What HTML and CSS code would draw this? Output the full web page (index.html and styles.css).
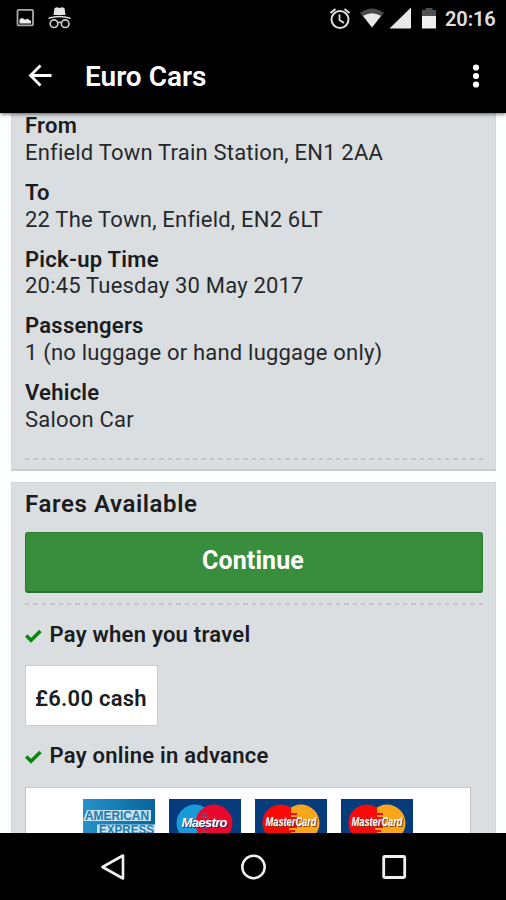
FILE: index.html
```html
<!DOCTYPE html>
<html lang="en">
<head>
<meta charset="utf-8">
<title>Euro Cars</title>
<link rel="stylesheet" href="styles.css">
</head>
<body>
<div class="phone">
  <header class="top">
    <div class="status">
      <svg class="notif" width="60" height="24" viewBox="0 0 60 24">
        <rect x="1.5" y="3.8" width="15.5" height="15.5" rx="1" fill="none" stroke="#a8a8a8" stroke-width="1.8"/>
        <path d="M3.5 17.500v-4l2.5-1.8 2.8 2 2.700-1 3.500 2.200v2.600z" fill="#eee"/>
        <path d="M37.500 9l1-7 2.500-.8 2.500.8 2.500-.8 2.500.8 1 7z" fill="#e4e4e4"/>
        <path d="M32.500 13q11-3.700 22 0v-1.500q-11-3.500-22 0z" fill="#e0e0e0"/>
        <circle cx="38" cy="17.700" r="3.800" fill="none" stroke="#ccc" stroke-width="1.700"/>
        <circle cx="49.200" cy="17.700" r="3.800" fill="none" stroke="#ccc" stroke-width="1.700"/>
        <path d="M41.600 16.800q2-1 4 0" fill="none" stroke="#ccc" stroke-width="1.500"/>
      </svg>
      <svg class="signals" width="108" height="24" viewBox="0 0 108 24">
        <circle cx="10" cy="12.500" r="8.500" fill="none" stroke="#ddd" stroke-width="2"/>
        <path d="M.5 6l5-4M19.500 6l-5-4" stroke="#ddd" stroke-width="2"/>
        <path d="M9.500 7.500v5.500l4.500 3" fill="none" stroke="#ddd" stroke-width="1.800"/>
        <path d="M30 6q12-9 24 0L42 20.500z" fill="#484848"/>
        <path d="M33 8.800q9-5.300 18 0l-9 11.700z" fill="#e8e8e8"/>
        <path d="M59.500 21.500h21.500V0.500z" fill="#e8e8e8"/>
        <path d="M92 3h3.500V1h7v2h3.500v7H92z" fill="#505050"/>
        <path d="M92 9h14v12.500H92z" fill="#eee"/>
      </svg>
      <span class="clock">20:16</span>
    </div>
    <div class="appbar">
      <svg class="back" width="26" height="26" viewBox="0 0 26 26"><path d="M24.500 12.500H4M13.500 2.500l-10 10 10 10" fill="none" stroke="#fff" stroke-width="2.800"/></svg>
      <h1>Euro Cars</h1>
      <svg class="more" width="8" height="26" viewBox="0 0 8 26" fill="#fff"><circle cx="4" cy="4.500" r="3.100"/><circle cx="4" cy="13" r="3.100"/><circle cx="4" cy="21.500" r="3.100"/></svg>
    </div>
  </header>

  <main>
    <section class="card trip">
      <dl>
        <div><dt>From</dt><dd>Enfield Town Train Station, EN1 2AA</dd></div>
        <div><dt>To</dt><dd>22 The Town, Enfield, EN2 6LT</dd></div>
        <div><dt>Pick-up Time</dt><dd>20:45 Tuesday 30 May 2017</dd></div>
        <div><dt>Passengers</dt><dd>1 (no luggage or hand luggage only)</dd></div>
        <div><dt>Vehicle</dt><dd>Saloon Car</dd></div>
      </dl>
      <div class="dash"></div>
    </section>

    <section class="card fares">
      <h2>Fares Available</h2>
      <button type="button">Continue</button>
      <div class="dash"></div>
      <h3><svg width="18" height="14" viewBox="0 0 18 14"><path d="M1.200 6.500l4.800 4.800L15.500 2" fill="none" stroke="#078a0c" stroke-width="3.500"/></svg>Pay when you travel</h3>
      <div class="price">£6.00 cash</div>
      <h3 class="online"><svg width="18" height="14" viewBox="0 0 18 14"><path d="M1.200 6.500l4.800 4.800L15.500 2" fill="none" stroke="#078a0c" stroke-width="3.500"/></svg>Pay online in advance</h3>
      <div class="logos">
        <svg class="logo" width="72" height="46" viewBox="0 0 72 46">
          <defs><linearGradient id="amex" x1="0" y1="0" x2="1" y2="0"><stop offset="0" stop-color="#2591c8"/><stop offset="1" stop-color="#07649e"/></linearGradient></defs>
          <rect width="72" height="46" fill="url(#amex)"/>
          <path d="M0 22l4-11h64v11zM14 25.500h58v11H14z" fill="#c3e0ef"/>
          <text class="amex" x="2" y="21" textLength="64" lengthAdjust="spacingAndGlyphs">AMERICAN</text>
          <text class="amex" x="16" y="35" textLength="55" lengthAdjust="spacingAndGlyphs">EXPRESS</text>
        </svg>
        <svg class="logo" width="72" height="46" viewBox="0 0 72 46">
          <rect width="72" height="46" fill="#063b7c"/>
          <circle cx="26" cy="24" r="18.500" fill="#199bd8"/><circle cx="45" cy="24" r="18.500" fill="#e8092e"/>
          <path d="M33 15h5M32 18h7M32 29h7M33 33h5" stroke="#8a4775" stroke-width="1.500"/>
          <text class="brand maestro-shade" x="13.500" y="28.700" textLength="46">Maestro</text>
          <text class="brand maestro" x="12.500" y="27.700" textLength="46">Maestro</text>
        </svg>
        <svg class="logo" width="72" height="46" viewBox="0 0 72 46">
          <rect width="72" height="46" fill="#063b7c"/>
          <circle cx="46" cy="24" r="18.500" fill="#f9a61a"/><path d="M36 8.500A18.500 18.500 0 1 0 36 39.500L36 33h4v-2h-6v-2h8V18h-6v-2h6v-2h-6z" fill="#f90a08"/>
          <text class="brand master-shade" x="11.500" y="28.300" textLength="51" lengthAdjust="spacingAndGlyphs">MasterCard</text>
          <text class="brand master" x="10.500" y="27.300" textLength="51" lengthAdjust="spacingAndGlyphs">MasterCard</text>
        </svg>
        <svg class="logo" width="72" height="46" viewBox="0 0 72 46">
          <rect width="72" height="46" fill="#063b7c"/>
          <circle cx="46" cy="24" r="18.500" fill="#f9a61a"/><path d="M36 8.500A18.500 18.500 0 1 0 36 39.500L36 33h4v-2h-6v-2h8V18h-6v-2h6v-2h-6z" fill="#f90a08"/>
          <text class="brand master-shade" x="11.500" y="28.300" textLength="51" lengthAdjust="spacingAndGlyphs">MasterCard</text>
          <text class="brand master" x="10.500" y="27.300" textLength="51" lengthAdjust="spacingAndGlyphs">MasterCard</text>
        </svg>
      </div>
    </section>
  </main>

  <nav>
    <svg width="28" height="28" viewBox="0 0 28 28"><path d="M3.500 14L24 2.500v23z" fill="none" stroke="#f0f0f0" stroke-width="2.600" stroke-linejoin="round"/></svg>
    <svg width="28" height="28" viewBox="0 0 28 28"><circle cx="14.500" cy="14" r="11.200" fill="none" stroke="#f0f0f0" stroke-width="2.500"/></svg>
    <svg width="28" height="28" viewBox="0 0 28 28"><rect x="3.700" y="3.500" width="21" height="21" rx="1" fill="none" stroke="#f0f0f0" stroke-width="2.800"/></svg>
  </nav>
</div>
</body>
</html>
```

FILE: styles.css
```css
* { box-sizing: border-box; margin: 0; padding: 0; }
body { background: #fdfefe; font-family: Roboto, "Liberation Sans", sans-serif; color: #1a1c1e; }
svg { display: block; flex: none; }
.phone { height: 900px; display: flex; flex-direction: column; overflow: hidden; }

.top { height: 113px; flex: none; background: #000; color: #fff; box-shadow: 0 1px 4px rgba(0, 0, 0, .6); z-index: 1; }
.status { height: 36px; display: flex; align-items: center; padding: 0 9px 0 16px; }
.signals { margin-left: auto; margin-top: 1px; }
.clock { font-size: 20px; font-weight: 600; color: #e0e0e0; margin-left: 7px; margin-top: 2px; width: 52px; white-space: nowrap; letter-spacing: -.1px; }
.appbar { height: 77px; display: flex; align-items: center; padding: 0 26px 0 27px; }
.appbar h1 { font-size: 28px; font-weight: 600; line-height: 34px; margin: 5px auto 0 32px; letter-spacing: 0; }
.back, .more { margin-top: 2px; }

main { flex: 1; min-height: 0; overflow: hidden; padding: 0 10px 0 11px; }
.card { background: #dadee1; border: 1px solid #d3d7d9; padding: 0 12px 0 13px; }
.trip { height: 360px; margin-top: -2px; padding-top: 1px; border-bottom: 2px solid #c9cccf; }
.trip dl { display: flex; flex-direction: column; gap: 13.25px; }
dt, dd { font-size: 22px; line-height: 26.75px; white-space: nowrap; }
dt { font-weight: 600; letter-spacing: .25px; }
dd { letter-spacing: .2px; color: #26292c; }
.dash { height: 2px; background: repeating-linear-gradient(90deg, #bfc5c9 0 4.500px, transparent 4.500px 8.400px); }
.trip .dash { margin-top: 24px; }

.fares { margin-top: 11px; height: 500px; }
h2 { font-size: 24px; font-weight: 600; line-height: 30px; margin-top: 6px; letter-spacing: .6px; }
button { display: block; width: 100%; height: 61px; margin-top: 13px; background: #388e3c; border: 1px solid #2b7d30; border-bottom: 2px solid #2b6f30; border-radius: 3px; color: #fff; font: 700 25px Roboto, "Liberation Sans", sans-serif; letter-spacing: .1px; padding: 0 2px 4px 0; }
.fares .dash { margin-top: 10px; }
h3 { display: flex; align-items: center; gap: 6.500px; font-size: 22px; font-weight: 600; line-height: 26px; margin-top: 17px; letter-spacing: .25px; }
h3 svg { margin-top: 1px; margin-left: -.5px; margin-right: .5px; }
.price { width: 133px; height: 61px; margin-top: 17px; padding: 6px 0 0 9px; display: flex; align-items: center; background: #fff; border: 1px solid #c9cdd0; font-size: 22px; font-weight: 600; letter-spacing: .25px; }
.online { margin-top: 17px; }
.logos { width: 446px; height: 120px; margin-top: 18px; background: #fff; border: 1px solid #c4c7ca; padding: 11px 0 0 57px; display: flex; align-items: flex-start; gap: 14px; }
.amex { font: 700 12.500px "Liberation Sans", sans-serif; fill: #1e79ae; }
.brand { font: italic 700 13px "Liberation Sans", sans-serif; }
.maestro { fill: #fff; }
.maestro-shade { fill: #123c6e; }
.master { fill: #fff; }
.master-shade { fill: #7c3d28; }

nav { height: 67px; flex: none; background: #000; display: flex; justify-content: center; align-items: center; gap: 112.500px; z-index: 1; }
```
